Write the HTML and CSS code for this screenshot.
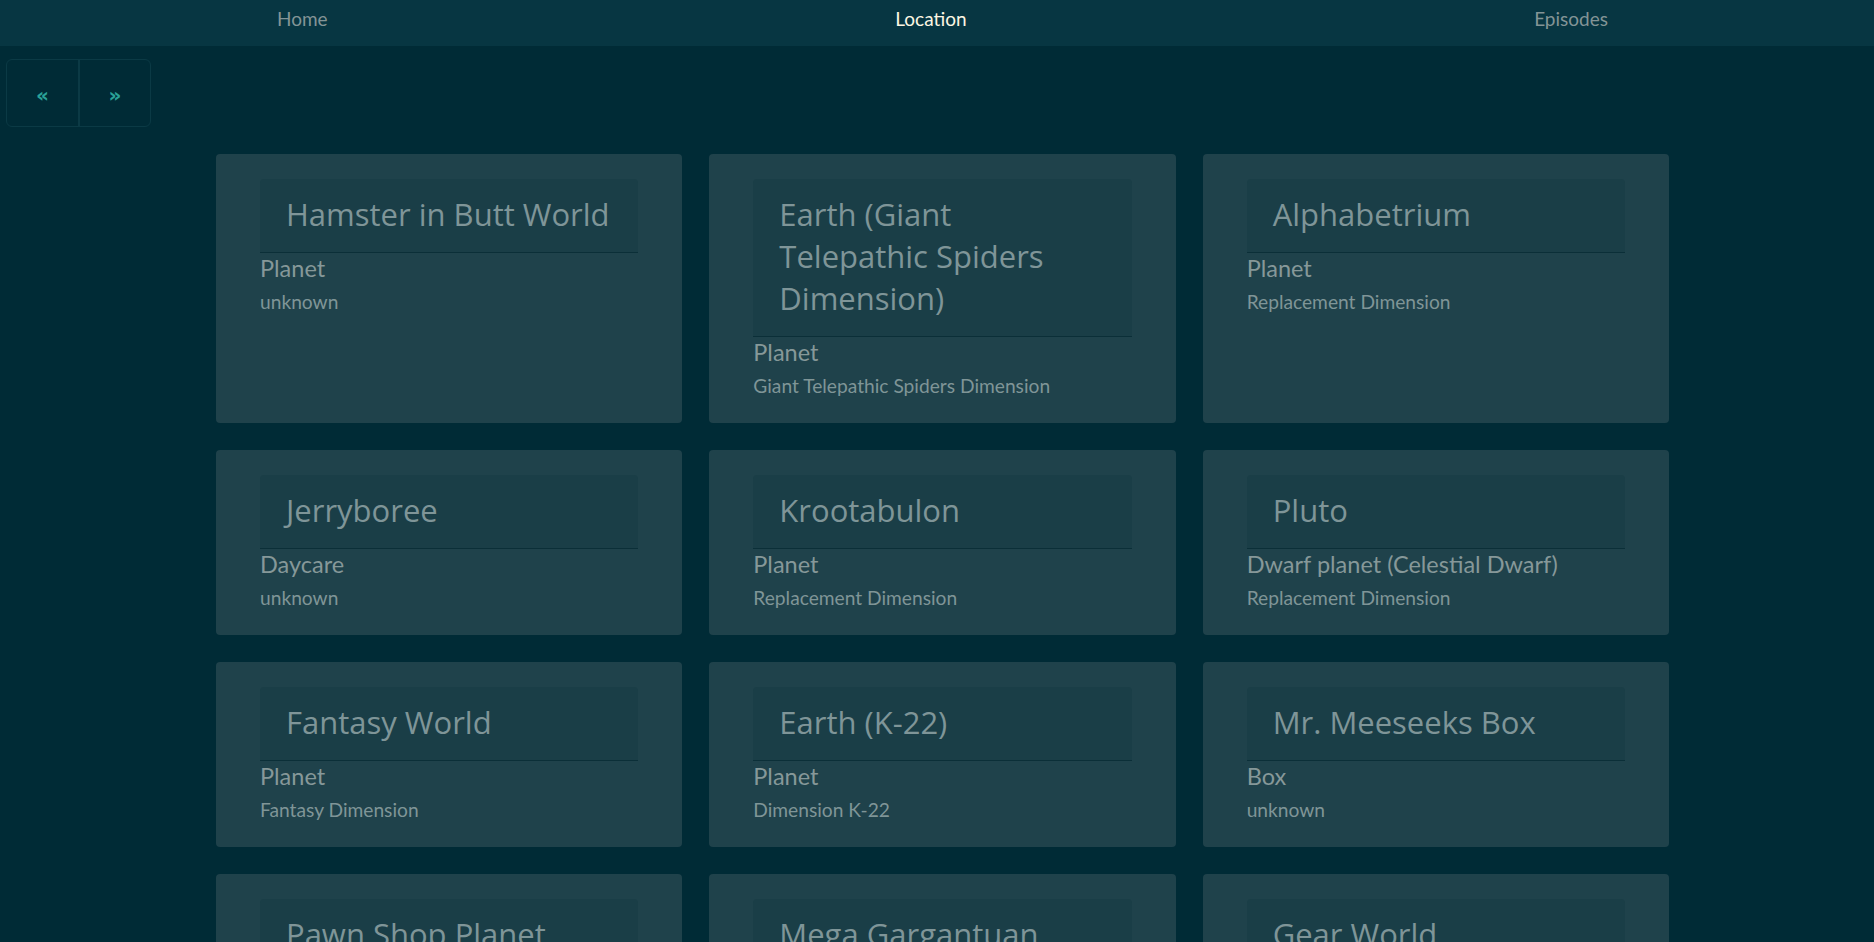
FILE: index.html
```html
<!DOCTYPE html>
<html lang="en">
<head>
<meta charset="utf-8">
<title>Locations</title>
<link rel="stylesheet" href="styles.css">
</head>
<body>
<nav class="topnav">
  <a class="nav-link" href="#">Home</a>
  <a class="nav-link active" href="#">Location</a>
  <a class="nav-link" href="#">Episodes</a>
</nav>
<div class="pager">
  <button class="pager-btn">&laquo;</button>
  <button class="pager-btn">&raquo;</button>
</div>
<main class="grid">
  <article class="card">
    <header class="card-head"><h2 class="card-title">Hamster in Butt World</h2></header>
    <p class="card-type">Planet</p>
    <p class="card-dim">unknown</p>
  </article>
  <article class="card">
    <header class="card-head"><h2 class="card-title">Earth (Giant Telepathic Spiders Dimension)</h2></header>
    <p class="card-type">Planet</p>
    <p class="card-dim">Giant Telepathic Spiders Dimension</p>
  </article>
  <article class="card">
    <header class="card-head"><h2 class="card-title">Alphabetrium</h2></header>
    <p class="card-type">Planet</p>
    <p class="card-dim">Replacement Dimension</p>
  </article>
  <article class="card">
    <header class="card-head"><h2 class="card-title">Jerryboree</h2></header>
    <p class="card-type">Daycare</p>
    <p class="card-dim">unknown</p>
  </article>
  <article class="card">
    <header class="card-head"><h2 class="card-title">Krootabulon</h2></header>
    <p class="card-type">Planet</p>
    <p class="card-dim">Replacement Dimension</p>
  </article>
  <article class="card">
    <header class="card-head"><h2 class="card-title">Pluto</h2></header>
    <p class="card-type">Dwarf planet (Celestial Dwarf)</p>
    <p class="card-dim">Replacement Dimension</p>
  </article>
  <article class="card">
    <header class="card-head"><h2 class="card-title">Fantasy World</h2></header>
    <p class="card-type">Planet</p>
    <p class="card-dim">Fantasy Dimension</p>
  </article>
  <article class="card">
    <header class="card-head"><h2 class="card-title">Earth (K-22)</h2></header>
    <p class="card-type">Planet</p>
    <p class="card-dim">Dimension K-22</p>
  </article>
  <article class="card">
    <header class="card-head"><h2 class="card-title">Mr. Meeseeks Box</h2></header>
    <p class="card-type">Box</p>
    <p class="card-dim">unknown</p>
  </article>
  <article class="card">
    <header class="card-head"><h2 class="card-title">Pawn Shop Planet</h2></header>
    <p class="card-type">Planet</p>
    <p class="card-dim">Replacement Dimension</p>
  </article>
  <article class="card">
    <header class="card-head"><h2 class="card-title">Mega Gargantuan Kingdom</h2></header>
    <p class="card-type">Planet</p>
    <p class="card-dim">Replacement Dimension</p>
  </article>
  <article class="card">
    <header class="card-head"><h2 class="card-title">Gear World</h2></header>
    <p class="card-type">Planet</p>
    <p class="card-dim">Replacement Dimension</p>
  </article>
</main>
</body>
</html>
```

FILE: styles.css
```css
* {
  box-sizing: border-box;
}

body {
  margin: 0;
  background: #002b36;
  color: #839496;
  font-family: Lato, "Noto Sans", "Liberation Sans", sans-serif;
}

.topnav {
  display: flex;
  justify-content: space-between;
  height: 46px;
  padding: 7px 266px 0 277px;
  background: #073642;
}

.nav-link {
  font-size: 19px;
  line-height: 24px;
  color: #839496;
  text-decoration: none;
}

.nav-link.active {
  color: #fdf6e3;
}

.pager {
  display: inline-flex;
  margin: 13px 0 0 6px;
  border: 1px solid #0b3a45;
  border-radius: 6px;
}

.pager-btn {
  width: 72px;
  height: 66px;
  padding: 4px 0 0;
  border: 0;
  background: transparent;
  color: #2aa198;
  font-family: "DejaVu Sans", sans-serif;
  font-size: 20px;
  font-weight: 700;
  line-height: 1;
}

.pager-btn:first-child {
  width: 71px;
}

.pager-btn + .pager-btn {
  border-left: 2px solid #0b3a45;
}

.grid {
  display: grid;
  grid-template-columns: repeat(3, 1fr);
  gap: 27px;
  width: 1453px;
  margin: 27px 0 0 216px;
}

.card {
  padding: 25px 44px 24px;
  background: #1f424b;
  border-radius: 4px;
}

.card-head {
  padding: 14px 28px 17px 26px;
  background: #1a3e47;
  border-bottom: 1px solid #0b2f38;
  border-radius: 4px 4px 0 0;
}

.card-title {
  margin: 0;
  font-family: "Open Sans", "Noto Sans", sans-serif;
  font-size: 31px;
  font-weight: 400;
  line-height: 42px;
  color: #7f9598;
}

.card-type {
  margin: 0;
  font-size: 23.5px;
  line-height: 30px;
  color: #869899;
}

.card-dim {
  margin: 6px 0 0;
  font-size: 19.2px;
  line-height: 26px;
  color: #7f9597;
}
```
